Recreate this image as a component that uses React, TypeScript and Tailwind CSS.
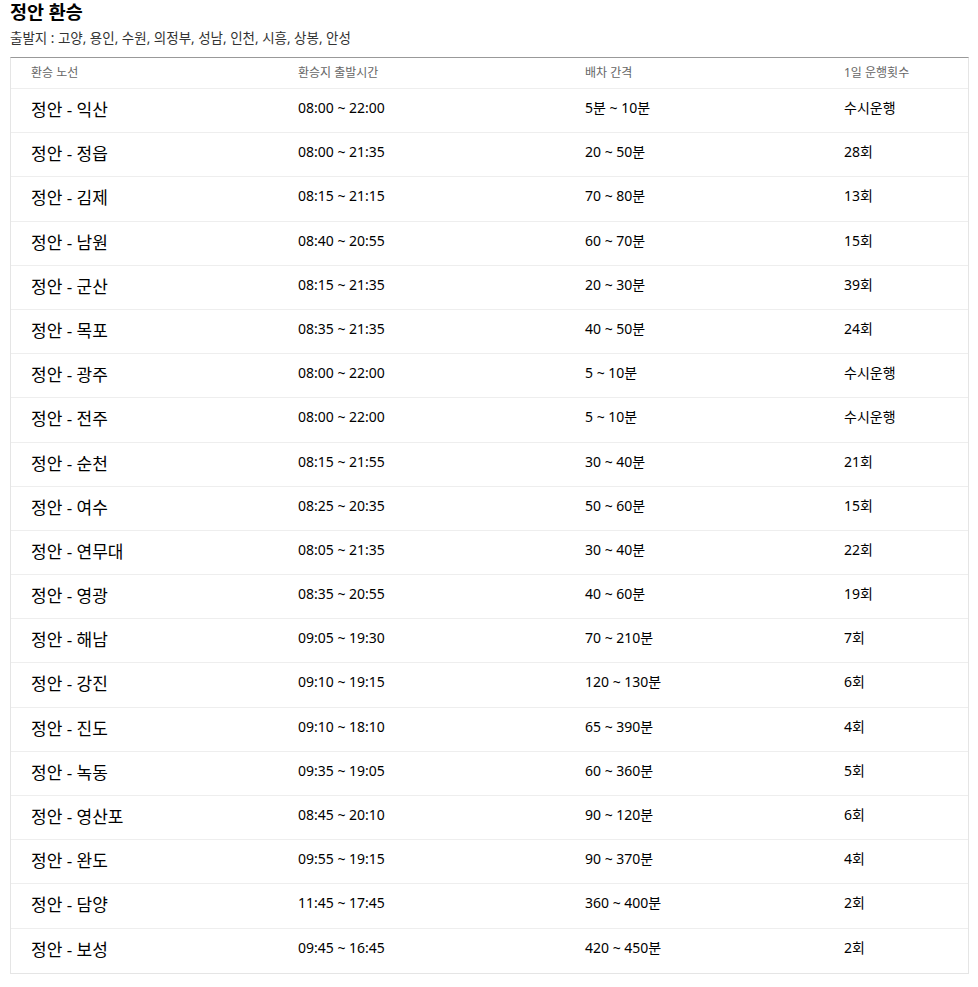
import React from "react";

const rows: [string, string, string, string][] = [
  ["정안 - 익산", "08:00 ~ 22:00", "5분 ~ 10분", "수시운행"],
  ["정안 - 정읍", "08:00 ~ 21:35", "20 ~ 50분", "28회"],
  ["정안 - 김제", "08:15 ~ 21:15", "70 ~ 80분", "13회"],
  ["정안 - 남원", "08:40 ~ 20:55", "60 ~ 70분", "15회"],
  ["정안 - 군산", "08:15 ~ 21:35", "20 ~ 30분", "39회"],
  ["정안 - 목포", "08:35 ~ 21:35", "40 ~ 50분", "24회"],
  ["정안 - 광주", "08:00 ~ 22:00", "5 ~ 10분", "수시운행"],
  ["정안 - 전주", "08:00 ~ 22:00", "5 ~ 10분", "수시운행"],
  ["정안 - 순천", "08:15 ~ 21:55", "30 ~ 40분", "21회"],
  ["정안 - 여수", "08:25 ~ 20:35", "50 ~ 60분", "15회"],
  ["정안 - 연무대", "08:05 ~ 21:35", "30 ~ 40분", "22회"],
  ["정안 - 영광", "08:35 ~ 20:55", "40 ~ 60분", "19회"],
  ["정안 - 해남", "09:05 ~ 19:30", "70 ~ 210분", "7회"],
  ["정안 - 강진", "09:10 ~ 19:15", "120 ~ 130분", "6회"],
  ["정안 - 진도", "09:10 ~ 18:10", "65 ~ 390분", "4회"],
  ["정안 - 녹동", "09:35 ~ 19:05", "60 ~ 360분", "5회"],
  ["정안 - 영산포", "08:45 ~ 20:10", "90 ~ 120분", "6회"],
  ["정안 - 완도", "09:55 ~ 19:15", "90 ~ 370분", "4회"],
  ["정안 - 담양", "11:45 ~ 17:45", "360 ~ 400분", "2회"],
  ["정안 - 보성", "09:45 ~ 16:45", "420 ~ 450분", "2회"],
];

const font = { fontFamily: '"Noto Sans", "Noto Sans CJK KR", sans-serif' };

export default function App() {
  return (
    <div className="bg-white text-[#111] px-[10px] pt-[0px]" style={font}>
      <h1 className="text-[18.5px] font-bold leading-[24px] text-black">정안 환승</h1>
      <p className="text-[13.5px] leading-[20px] mt-[4px] text-[#333]">
        출발지 : 고양, 용인, 수원, 의정부, 성남, 인천, 시흥, 상봉, 안성
      </p>
      <div className="mt-[9px] w-[959px] border-t border-t-[#999] border-x border-x-[#e5e5e5] border-b border-b-[#e5e5e5]">
        <div className="grid grid-cols-[267px_287px_259px_1fr] h-[31px] items-center border-b border-[#eeeeee] text-[12px] text-[#666]">
          <div className="pl-[20px]">환승 노선</div>
          <div className="pl-[20px]">환승지 출발시간</div>
          <div className="pl-[20px]">배차 간격</div>
          <div className="pl-[20px]">1일 운행횟수</div>
        </div>
        {rows.map((r, i) => (
          <div
            key={i}
            className={`grid grid-cols-[267px_287px_259px_1fr] h-[44.2px] ${i < rows.length - 1 ? "border-b border-[#eeeeee]" : ""}`}
          >
            <div className="pl-[20px] pt-[10px] text-[17px] leading-[22px] text-black">{r[0]}</div>
            <div className="pl-[20px] pt-[10px] text-[14px] leading-[18px] text-black">{r[1]}</div>
            <div className="pl-[20px] pt-[10px] text-[14px] leading-[18px] text-black">{r[2]}</div>
            <div className="pl-[20px] pt-[10px] text-[14px] leading-[18px] text-black">{r[3]}</div>
          </div>
        ))}
      </div>
    </div>
  );
}
